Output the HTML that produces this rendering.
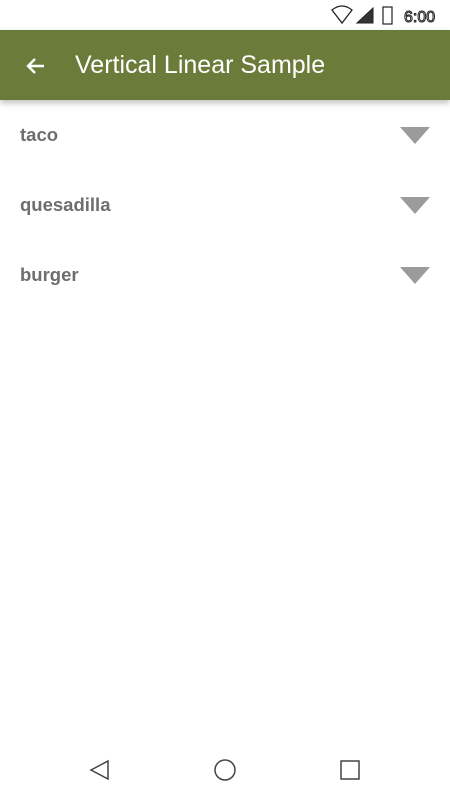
<!DOCTYPE html>
<html><head><meta charset="utf-8"><style>
body{margin:0;width:450px;height:800px;background:#fff;position:relative;overflow:hidden;font-family:"Liberation Sans",sans-serif}
.bar{position:absolute;top:30px;left:0;width:450px;height:70px;background:#6b7c3a;box-shadow:0 3px 6px rgba(0,0,0,.25)}
.title{position:absolute;left:75px;top:51px;color:#fff;font-size:25px}
.item{position:absolute;left:20px;font-size:18.5px;font-weight:bold;color:#6e6e6e}
.tri{position:absolute;left:400px;width:0;height:0;border-left:15px solid transparent;border-right:15px solid transparent;border-top:17px solid #9b9b9b}
</style></head><body>
<svg style="position:absolute;left:330px;top:4px" width="120" height="22">
<path d="M2 6 Q12 -2 22 6 L12 19 Z" fill="none" stroke="#222" stroke-width="1.3"/>
<path d="M27 19 L43 4 L43 19 Z" fill="#333" stroke="#222"/>
<rect x="53" y="3" width="9" height="17" fill="none" stroke="#222" stroke-width="1.2"/>
<text x="74" y="18" font-size="16" font-family="Liberation Sans" fill="#fff" stroke="#222" stroke-width="1">6:00</text>
</svg>
<div class="bar"></div>
<svg style="position:absolute;left:24px;top:55px" width="24" height="22"><path d="M20 11 H4 M11 4 L4 11 L11 18" stroke="#fff" stroke-width="2.4" fill="none"/></svg>
<div class="title">Vertical Linear Sample</div>
<div class="item" style="top:124px">taco</div><div class="tri" style="top:127px"></div>
<div class="item" style="top:194px">quesadilla</div><div class="tri" style="top:197px"></div>
<div class="item" style="top:264px">burger</div><div class="tri" style="top:267px"></div>
<svg style="position:absolute;left:0;top:750px" width="450" height="40">
<path d="M91 20 L108 11 L108 29 Z" fill="none" stroke="#444" stroke-width="1.5"/>
<circle cx="225" cy="20" r="10" fill="none" stroke="#444" stroke-width="1.5"/>
<rect x="341" y="11" width="18" height="18" fill="none" stroke="#444" stroke-width="1.5"/>
</svg>
</body></html>
